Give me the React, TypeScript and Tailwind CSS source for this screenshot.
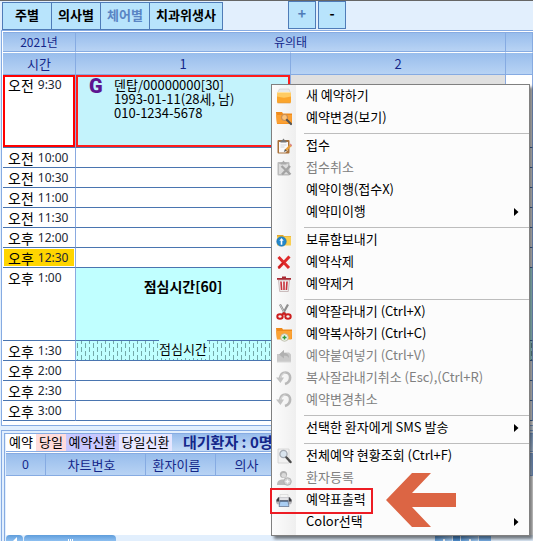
import type { ReactNode } from 'react';

type MenuEntry = {
  label: string;
  icon?: ReactNode;
  disabled?: boolean;
  submenu?: boolean;
  marked?: boolean;
};

const Svg = ({ children }: { children: ReactNode }) => (
  <svg width="16" height="16" viewBox="0 0 16 16" fill="none" aria-hidden="true">
    {children}
  </svg>
);

const NewIcon = () => (
  <Svg>
    <path d="M3.500 1h9.500l1.500 4h-13z" fill="#e9e9e9" stroke="#c9c9c9" strokeWidth="0.600" />
    <rect x="1" y="4" width="14" height="11" rx="1.500" fill="#ffcb63" />
    <path d="M1 8.500c5 1.500 9 1.500 14 0v5a1.500 1.500 0 0 1-1.500 1.500h-11A1.500 1.500 0 0 1 1 13.500z" fill="#fba52c" />
    <path d="M1.500 4.500h13" stroke="#ffe2a0" />
    <path d="M1.500 15h13" stroke="#d9974a" strokeWidth="0.600" />
  </Svg>
);

const EditIcon = () => (
  <Svg>
    <path d="M0 2h6l1 1.500h9V14H1z" fill="#f08c1c" />
    <path d="M0 5h16l-.6 8.500H1z" fill="#fba033" />
    <circle cx="8.500" cy="7.500" r="3" fill="#fcc27a" stroke="#c98f55" strokeWidth="1.200" />
    <path d="m11 10 4 4" stroke="#555" strokeWidth="2.200" strokeLinecap="round" />
  </Svg>
);

const ReceiptIcon = () => (
  <Svg>
    <rect x="1.500" y="2" width="12" height="13.500" rx="1" fill="#a9713a" />
    <path d="M3 4h9v8l-2.500 2.500H3z" fill="#fafafa" />
    <path d="M4.500 4.500V2.500H6L7.500.5 9 2.500h1.500v2z" fill="#777" />
    <path d="M4.500 7h6M4.500 9h4" stroke="#d5d5d5" />
    <path d="m15 7-5.500 5.500" stroke="#e9a03c" strokeWidth="2.400" />
    <path d="m9 11-1.200 3 3-1.200" fill="#555" />
    <path d="m14 6 2 2" stroke="#d98888" strokeWidth="1.500" />
  </Svg>
);

const ReceiptCancelIcon = () => (
  <Svg>
    <rect x="1.500" y="2" width="12" height="13.500" rx="1" fill="#bcbcbc" />
    <path d="M3 4h9v10H3z" fill="#dcdcdc" />
    <path d="M4.500 4.500v-2H6L7.500.5 9 2.500h1.500v2z" fill="#aaa" />
    <path d="m5.500 6 9 8.500M14 6l-8 8.500" stroke="#a3a3a3" strokeWidth="2.400" />
  </Svg>
);

const HoldIcon = () => (
  <Svg>
    <path d="M1 3h6l1 1h7v9H1z" fill="#e4a92a" />
    <path d="M1 4.500h14v9H1z" fill="#f9cf52" />
    <circle cx="5.500" cy="9.500" r="4.800" fill="#2388cc" stroke="#1c669e" strokeWidth="0.500" />
    <path d="M5.500 6 3.300 8.700h1.400v4h1.600v-4h1.400z" fill="#fff" />
  </Svg>
);

const DeleteIcon = () => (
  <Svg>
    <path d="M2.500 3 13 14M13.500 2.500 2.500 14" stroke="#df2b2b" strokeWidth="3" />
    <path d="M2.500 14.500c1-2 3-4.500 5-6" stroke="#b81818" strokeWidth="1" />
  </Svg>
);

const TrashIcon = () => (
  <Svg>
    <path d="M2.500 4h11l-1.200 11.500H3.700z" fill="#efefef" stroke="#b9a5a5" strokeWidth="0.700" />
    <path d="M1 2.800h14M6 1.300h4" stroke="#a82a33" strokeWidth="1.700" />
    <path d="M5 5.500 5.600 14M8 5.500V14M11 5.500 10.400 14" stroke="#c8323c" strokeWidth="1.600" />
  </Svg>
);

const CutIcon = () => (
  <Svg>
    <path d="M4 .5 9.500 10.500M12 .5 6.500 10.500" stroke="#8d8d8d" strokeWidth="2.200" />
    <path d="M4.200 1 9 10" stroke="#d8d8d8" strokeWidth="0.800" />
    <ellipse cx="4" cy="12.500" rx="2.700" ry="2.300" stroke="#cc1d1d" strokeWidth="2" />
    <ellipse cx="12" cy="12.500" rx="2.700" ry="2.300" stroke="#cc1d1d" strokeWidth="2" />
    <path d="m6 11 2-2 2 2" stroke="#cc1d1d" strokeWidth="1.800" />
  </Svg>
);

const CopyIcon = () => (
  <Svg>
    <path d="M0 2h6l1 1.500h9V13H1z" fill="#ef8a1a" />
    <path d="M0 5h16l-.6 8.500H1z" fill="#fba335" />
    <circle cx="8.500" cy="11.500" r="3.800" fill="#edf3e8" stroke="#b9b9a6" strokeWidth="0.800" />
    <path d="M8.500 9.500v4M6.500 11.500h4" stroke="#2f9a3c" strokeWidth="1.400" />
  </Svg>
);

const PasteIcon = () => (
  <Svg>
    <path d="M1 6h3l4-4v2.500h5l2 2V14H1z" fill="#c9c9c9" />
    <path d="M3 6.500 8 2v3c3.500 0 5 1.500 5 5-1.500-2-3-2.200-5-2.200v2.700z" fill="#b1b1b1" />
    <path d="M1 14h14" stroke="#d8d8d8" />
  </Svg>
);

const UndoIcon = () => (
  <Svg>
    <path d="M4 8.500C4.500 4 7 2.500 9.500 2.500c6 0 6.500 9.500-.5 11.500" stroke="#b9b9b9" strokeWidth="2.600" />
    <path d="M4.500 8c.8-3.500 2.500-5 5-5" stroke="#dedede" strokeWidth="1" />
    <path d="M0 7.500h8L4.500 13z" fill="#c2c2c2" />
  </Svg>
);

const SearchIcon = () => (
  <Svg>
    <path d="M2 1h11v14H2z" fill="#f1f1f1" stroke="#d0d0d0" strokeWidth="0.800" />
    <circle cx="7.500" cy="6" r="3.600" fill="#d9e4ee" stroke="#a3a9b2" strokeWidth="1.300" />
    <path d="m10.500 9.500 4 4.500" stroke="#4b4b4b" strokeWidth="2.400" strokeLinecap="round" />
  </Svg>
);

const PatientIcon = () => (
  <Svg>
    <circle cx="7.500" cy="4.500" r="3.600" fill="#b1b1b1" />
    <circle cx="7.800" cy="5.300" r="2.400" fill="#dadada" />
    <path d="M1 15c0-4 2-5.500 6.500-5.500S13 11 13 15z" fill="#bababa" />
    <circle cx="11.500" cy="11.500" r="3.800" fill="#cfcfcf" stroke="#a9a9a9" strokeWidth="0.800" />
    <path d="M11.500 9.500v4M9.500 11.500h4" stroke="#f7f7f7" strokeWidth="1.300" />
  </Svg>
);

const PrintIcon = () => (
  <Svg>
    <path d="M4 2.500h8V6H4z" fill="#f5f5f5" stroke="#d0d0d0" strokeWidth="0.600" />
    <path d="M2 5h12l2 4c0 2-.5 3-2 3.500H2C.5 12 0 11 0 9z" fill="#b4b4b9" />
    <path d="M.5 7.500 3 5v4.500H.5zM13 5l2.500 2.500v2H13z" fill="#3c3c40" />
    <path d="M4 5.500h8V8H4z" fill="#e2e2e6" />
    <path d="M4 9h8l1 5.500H3z" fill="#a9cdf3" />
    <path d="M3.500 9h9" stroke="#33415c" strokeWidth="1.200" />
    <path d="M4 9.500 3 14.500h10l-1-5" stroke="#5d6c86" strokeWidth="0.700" />
  </Svg>
);

const menuGroups: MenuEntry[][] = [
  [
    { label: '새 예약하기', icon: <NewIcon /> },
    { label: '예약변경(보기)', icon: <EditIcon /> },
  ],
  [
    { label: '접수', icon: <ReceiptIcon /> },
    { label: '접수취소', icon: <ReceiptCancelIcon />, disabled: true },
    { label: '예약이행(접수X)' },
    { label: '예약미이행', submenu: true },
  ],
  [
    { label: '보류함보내기', icon: <HoldIcon /> },
    { label: '예약삭제', icon: <DeleteIcon /> },
    { label: '예약제거', icon: <TrashIcon /> },
  ],
  [
    { label: '예약잘라내기 (Ctrl+X)', icon: <CutIcon /> },
    { label: '예약복사하기 (Ctrl+C)', icon: <CopyIcon /> },
    { label: '예약붙여넣기 (Ctrl+V)', icon: <PasteIcon />, disabled: true },
    { label: '복사잘라내기취소 (Esc),(Ctrl+R)', icon: <UndoIcon />, disabled: true },
    { label: '예약변경취소', icon: <UndoIcon />, disabled: true },
  ],
  [{ label: '선택한 환자에게 SMS 발송', submenu: true }],
  [
    { label: '전체예약 현황조회 (Ctrl+F)', icon: <SearchIcon /> },
    { label: '환자등록', icon: <PatientIcon />, disabled: true },
    { label: '예약표출력', icon: <PrintIcon />, marked: true },
    { label: 'Color선택', submenu: true },
  ],
];

function ContextMenu() {
  return (
    <div
      role="menu"
      className="absolute left-[271px] top-[84px] w-[259px] border border-[#808080] bg-[linear-gradient(to_right,#fcfcfc,#efefef_24px,#fcfcfc_24px)] pb-0.5 shadow-[3px_3px_3px_rgba(0,0,0,0.5)]"
    >
      {menuGroups.map((group, i) => (
        <div key={i} role="group">
          {i > 0 && (
            <div className="h-1.5 pt-1 pl-8">
              <div className="h-px bg-[#bdbdbd]" />
            </div>
          )}
          {group.map((item) => (
            <button
              key={item.label}
              type="button"
              role="menuitem"
              disabled={item.disabled}
              className="relative flex h-[22px] w-full items-center text-left whitespace-nowrap text-black disabled:text-[#808080]"
            >
              <span className="flex w-[34px] shrink-0 pl-1">{item.icon}</span>
              <span className="flex-1 pb-0.5">{item.label}</span>
              {item.submenu && (
                <svg width="5" height="8" viewBox="0 0 5 8" className="mr-2.5" aria-hidden="true">
                  <path d="M0 0v8l4.500-4z" fill="#000" />
                </svg>
              )}
              {item.marked && (
                <span className="absolute -top-px -left-0.5 h-[26px] w-[103px] border-2 border-[#ed1c24]" />
              )}
            </button>
          ))}
        </div>
      ))}
      <svg width="70" height="54" viewBox="0 0 70 54" className="absolute right-[73px] bottom-2" aria-hidden="true">
        <path d="M0 27 26 0h19L26 20h44v14H26l19 20H26z" fill="#dc6544" />
      </svg>
    </div>
  );
}

const views = [
  { label: '주별', width: 'w-[50px]' },
  { label: '의사별', width: 'w-[50px]' },
  { label: '체어별', width: 'w-[50px]', active: true },
  { label: '치과위생사', width: 'w-[74px]' },
];

function Toolbar() {
  return (
    <div className="flex h-[30px] border-t border-[#666] pl-0.5">
      <div className="flex pt-px">
        {views.map((v) => (
          <button
            key={v.label}
            type="button"
            className={`-mr-px h-7 border border-[#4f7cb8] bg-[#b8e4fc] pb-0.5 text-[13px] font-bold whitespace-nowrap ${v.width} ${
              v.active ? 'text-[#5a85c4]' : 'text-black'
            }`}
          >
            {v.label}
          </button>
        ))}
      </div>
      <div className="ml-[66px] flex gap-0.5">
        <button type="button" className="h-7 w-7 border border-[#4f7cb8] bg-[#b8e4fc] pb-1 text-sm font-bold text-[#4f7cb8]">
          +
        </button>
        <button type="button" className="h-7 w-7 border border-[#4f7cb8] bg-[#b8e4fc] pb-1 text-sm font-bold text-black">
          -
        </button>
      </div>
    </div>
  );
}

const slots = [
  { period: '오전', time: '9:30', kind: 'booking' },
  { period: '오전', time: '10:00' },
  { period: '오전', time: '10:30' },
  { period: '오전', time: '11:00' },
  { period: '오전', time: '11:30' },
  { period: '오후', time: '12:00' },
  { period: '오후', time: '12:30', kind: 'now' },
  { period: '오후', time: '1:00', kind: 'lunch' },
  { period: '오후', time: '1:30', kind: 'lunchEnd' },
  { period: '오후', time: '2:00' },
  { period: '오후', time: '2:30' },
  { period: '오후', time: '3:00' },
];

const headCell = 'border-r border-b border-[#86abe2] bg-linear-to-b from-[#98bdec] to-[#b8d3f4] p-0 font-normal text-[#14278a]';
const cell = 'border-r border-b border-r-[#8aaae0] border-b-[#4a75b0] p-0';

// 점심시간 빗금 무늬
const LunchPattern = ({ id }: { id: string }) => (
  <svg className="absolute inset-0 h-full w-full" aria-hidden="true">
    <pattern id={id} width="8" height="8" patternUnits="userSpaceOnUse">
      <path d="M1.500 2v5M5.500 0v3M5.500 6v2" stroke="#74a9a9" />
    </pattern>
    <rect width="100%" height="100%" fill={`url(#${id})`} />
  </svg>
);

function SlotCell({ kind, column }: { kind?: string; column: number }) {
  if (kind === 'booking') {
    if (column > 0) {
      return <td className={`${cell} ${column === 1 ? 'bg-[#e0e0e0]' : ''}`} />;
    }
    return (
      <td className={`${cell} align-top`}>
        <div className="flex h-[72px] border-2 border-[#ff1c1c] bg-[#c4f3fc] pl-[11px]">
          <span className="w-[25px] font-['Roboto'] text-xl leading-[18px] font-black text-[#5c1590]">G</span>
          <div className="pt-px leading-[14px] whitespace-nowrap">
            <p>덴탑/00000000[30]</p>
            <p>1993-01-11(28세, 남)</p>
            <p>010-1234-5678</p>
          </div>
        </div>
      </td>
    );
  }
  if (kind === 'lunch') {
    return (
      <td className={`${cell} bg-[#c0ffff] pt-2 text-center align-top text-sm font-bold whitespace-nowrap`}>
        {column === 0 && '점심시간[60]'}
      </td>
    );
  }
  if (kind === 'lunchEnd') {
    return (
      <td className={`${cell} relative bg-[#c0ffff] text-center align-top leading-4 whitespace-nowrap`}>
        <LunchPattern id={`lunch-${column}`} />
        {column === 0 && <span className="relative bg-[#c0ffff]">점심시간</span>}
      </td>
    );
  }
  return <td className={cell} />;
}

function Schedule() {
  return (
    <div className="ml-px border border-r-0 border-[#86abe2] bg-white pt-px pb-1 pl-px">
      <table className="w-full table-fixed border-separate border-spacing-0">
        <colgroup>
          <col className="w-[73px]" />
          <col className="w-[215px]" />
          <col className="w-[215px]" />
          <col />
        </colgroup>
        <thead>
          <tr className="h-5">
            <th className={`${headCell} border-t text-xs`}>2021년</th>
            <th colSpan={2} className={`${headCell} border-t text-xs`}>유의태</th>
            <th className={`${headCell} border-t`} />
          </tr>
          <tr className="h-[23px]">
            <th className={`${headCell} border-t border-t-white`}>시간</th>
            <th className={`${headCell} border-t border-t-white`}>1</th>
            <th className={`${headCell} border-t border-t-white`}>2</th>
            <th className={`${headCell} border-t border-t-white`} />
          </tr>
        </thead>
        <tbody>
          {slots.map((s) => (
            <tr key={s.time} className={s.kind === 'booking' || s.kind === 'lunch' ? 'h-[73px]' : 'h-5'}>
              <td className={`${cell} align-top`}>
                <div
                  className={`flex gap-1 whitespace-nowrap ${
                    s.kind === 'booking'
                      ? 'h-[72px] items-start border-2 border-[#ff0000] pl-[3px]'
                      : s.kind === 'now'
                        ? 'm-px h-[17px] items-center bg-[#ffd500] pl-1'
                        : 'h-[19px] items-center pl-[5px]'
                  }`}
                >
                  <span className="text-sm leading-4">{s.period}</span>
                  <span className="font-['Noto_Sans'] text-xs leading-4 text-[#1c2733]">{s.time}</span>
                </div>
              </td>
              {[0, 1, 2].map((column) => (
                <SlotCell key={column} kind={s.kind} column={column} />
              ))}
            </tr>
          ))}
        </tbody>
      </table>
    </div>
  );
}

const legends = [
  { label: '예약', style: 'w-[30px] bg-white' },
  { label: '당일', style: 'w-[30px] bg-[#ffdcdc]' },
  { label: '예약신환', style: 'w-[53px] bg-[#c8c8ff]' },
  { label: '당일신환', style: 'w-[53px] bg-[#e6e6ff]' },
];

function WaitingList() {
  return (
    <div className="mt-1 ml-px flex flex-1 flex-col border-t border-l border-[#86abe2] pt-0.5 pl-0.5">
      <div className="flex flex-1 flex-col border-t border-l border-[#86abe2] pl-px">
        <div className="flex h-[18px] border-b border-[#86abe2]">
          {legends.map((l) => (
            <span key={l.label} className={`text-center leading-4 whitespace-nowrap ${l.style}`}>
              {l.label}
            </span>
          ))}
          <h2 className="flex-1 bg-linear-to-b from-[#98bdec] to-[#c6dcf7] pl-[11px] text-[15px] leading-4 font-bold text-[#14278a]">
            대기환자 : 0명
          </h2>
        </div>
        <div className="flex-1 bg-white pt-px">
          <table className="w-full table-fixed border-separate border-spacing-0">
            <colgroup>
              <col className="w-10" />
              <col className="w-[100px]" />
              <col className="w-[70px]" />
              <col className="w-[62px]" />
              <col />
              <col className="w-1" />
            </colgroup>
            <thead>
              <tr className="h-[23px]">
                <th className={`${headCell} border-t font-['Noto_Sans'] text-xs`}>0</th>
                <th className={`${headCell} border-t pr-2`}>차트번호</th>
                <th className={`${headCell} border-t pr-2`}>환자이름</th>
                <th className={`${headCell} border-t`}>의사</th>
                <th className={`${headCell} border-t`} />
                <th className={`${headCell} border-t`} />
              </tr>
            </thead>
          </table>
        </div>
        <div className="flex h-1.5 gap-px bg-[#e2effd]">
          <span className="flex w-[17px] justify-center rounded-t-sm bg-linear-to-b from-[#5f9ddb] to-[#8dbff0]">
            <svg width="6" height="6" viewBox="0 0 6 6" aria-hidden="true">
              <path d="M5 2v4H1z" fill="#fff" />
            </svg>
          </span>
          <span className="flex w-[92px] items-end justify-center gap-px rounded-t-sm bg-linear-to-b from-[#5f9ddb] to-[#8dbff0]">
            <span className="h-0.5 w-px bg-white" />
            <span className="h-0.5 w-px bg-white" />
            <span className="h-0.5 w-px bg-white" />
          </span>
          <span className="mr-[42px] ml-auto flex gap-px">
            <span className="flex w-[17px] items-end justify-center bg-linear-to-r from-[#5f9ddb] to-[#a8cff5]">
              <span className="h-0.5 w-0.5 bg-white" />
            </span>
            <span className="w-[7px] bg-[#4f8fd0]" />
            <span className="flex w-[17px] items-end justify-center bg-linear-to-r from-[#5f9ddb] to-[#a8cff5]">
              <span className="h-0.5 w-0.5 bg-white" />
            </span>
            <span className="w-3 bg-[#78aee6]" />
          </span>
        </div>
      </div>
    </div>
  );
}

export default function App() {
  return (
    <div className="relative flex min-h-screen flex-col overflow-hidden bg-[#e2effd] font-['Noto_Sans_CJK_KR',sans-serif] text-[13px] leading-[18px] text-black">
      <Toolbar />
      <Schedule />
      <WaitingList />
      <ContextMenu />
    </div>
  );
}
